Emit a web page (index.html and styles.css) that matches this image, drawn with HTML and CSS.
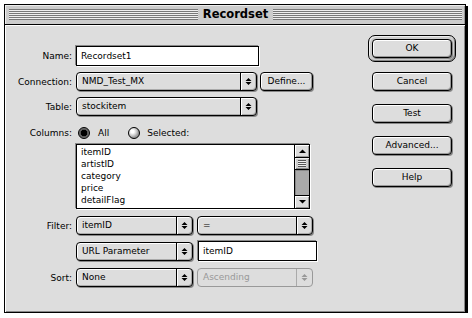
FILE: index.html
```html
<!DOCTYPE html>
<html>
<head>
<meta charset="UTF-8">
<title>Recordset</title>
<link rel="stylesheet" href="styles.css">
</head>
<body>
<div class="window">
    <div class="titlebar">
        <div class="stripes"></div>
        <span class="title">Recordset</span>
        <div class="stripes"></div>
    </div>
    <div class="content">
        <div class="form">
            <div class="row row-name">
                <span class="label">Name:</span>
                <div class="edit edit-name">Recordset1</div>
            </div>
            <div class="row row-gap6">
                <span class="label">Connection:</span>
                <div class="popup popup-wide">
                    <span class="popup-text">NMD_Test_MX</span>
                    <span class="popup-arrows"><svg width="7" height="9" viewBox="0 0 7 9"><path d="M0.5 4H6.5L3.5 1Z M0.5 5H6.5L3.5 8Z"/></svg></span>
                </div>
                <div class="button button-define">Define...</div>
            </div>
            <div class="row row-gap6">
                <span class="label">Table:</span>
                <div class="popup popup-wide">
                    <span class="popup-text">stockitem</span>
                    <span class="popup-arrows"><svg width="7" height="9" viewBox="0 0 7 9"><path d="M0.5 4H6.5L3.5 1Z M0.5 5H6.5L3.5 8Z"/></svg></span>
                </div>
            </div>
            <div class="row row-columns">
                <span class="label">Columns:</span>
                <span class="radio radio-on"></span>
                <span class="radio-label">All</span>
                <span class="radio radio-off"></span>
                <span class="radio-label">Selected:</span>
            </div>
            <div class="row row-list">
                <span class="label"></span>
                <div class="listbox">
                    <div class="list-items">
                        <div>itemID</div>
                        <div>artistID</div>
                        <div>category</div>
                        <div>price</div>
                        <div>detailFlag</div>
                        <div>title</div>
                    </div>
                    <div class="scrollbar">
                        <div class="scroll-arrow scroll-up"><svg width="7" height="4" viewBox="0 0 7 4"><path d="M0 4H7L3.5 0.5Z"/></svg></div>
                        <div class="scroll-thumb"><span class="grip"></span></div>
                        <div class="scroll-track"></div>
                        <div class="scroll-arrow scroll-down"><svg width="7" height="4" viewBox="0 0 7 4"><path d="M0 0H7L3.5 3.5Z"/></svg></div>
                    </div>
                </div>
            </div>
            <div class="row row-filter">
                <span class="label">Filter:</span>
                <div class="popup popup-half">
                    <span class="popup-text">itemID</span>
                    <span class="popup-arrows"><svg width="7" height="9" viewBox="0 0 7 9"><path d="M0.5 4H6.5L3.5 1Z M0.5 5H6.5L3.5 8Z"/></svg></span>
                </div>
                <div class="popup popup-op">
                    <span class="popup-text">=</span>
                    <span class="popup-arrows"><svg width="7" height="9" viewBox="0 0 7 9"><path d="M0.5 4H6.5L3.5 1Z M0.5 5H6.5L3.5 8Z"/></svg></span>
                </div>
            </div>
            <div class="row row-gap6">
                <span class="label"></span>
                <div class="popup popup-half">
                    <span class="popup-text">URL Parameter</span>
                    <span class="popup-arrows"><svg width="7" height="9" viewBox="0 0 7 9"><path d="M0.5 4H6.5L3.5 1Z M0.5 5H6.5L3.5 8Z"/></svg></span>
                </div>
                <div class="edit edit-param">itemID</div>
            </div>
            <div class="row row-gap7">
                <span class="label">Sort:</span>
                <div class="popup popup-half">
                    <span class="popup-text">None</span>
                    <span class="popup-arrows"><svg width="7" height="9" viewBox="0 0 7 9"><path d="M0.5 4H6.5L3.5 1Z M0.5 5H6.5L3.5 8Z"/></svg></span>
                </div>
                <div class="popup popup-op popup-disabled">
                    <span class="popup-text">Ascending</span>
                    <span class="popup-arrows"><svg width="7" height="9" viewBox="0 0 7 9"><path d="M0.5 4H6.5L3.5 1Z M0.5 5H6.5L3.5 8Z"/></svg></span>
                </div>
            </div>
        </div>
        <div class="buttons">
            <div class="default-ring">
                <div class="button button-side">OK</div>
            </div>
            <div class="button button-side button-stack">Cancel</div>
            <div class="button button-side button-stack">Test</div>
            <div class="button button-side button-stack">Advanced...</div>
            <div class="button button-side button-stack">Help</div>
        </div>
    </div>
</div>
</body>
</html>
```

FILE: styles.css
```css
body {
    margin: 0;
    background: #fff;
    font-family: "DejaVu Sans", sans-serif;
    font-size: 9px;
    color: #000;
}
.window {
    margin: 4px 0 0 4px;
    width: 462px;
    height: 309px;
    box-sizing: border-box;
    border: 1px solid #000;
    box-shadow: 2px 2px 0 #000;
    background: #ddd;
    display: flex;
    flex-direction: column;
}
.titlebar {
    height: 20px;
    box-sizing: border-box;
    border-bottom: 1px solid #000;
    background: #ccc;
    box-shadow: inset 1px 1px 0 #eee, inset -1px 0 0 #999;
    padding: 4px 3px 4px 4px;
    display: flex;
    align-items: flex-start;
}
.stripes {
    flex: 1;
    height: 11px;
    background: repeating-linear-gradient(to bottom, #777 0, #777 1px, #eee 1px, #eee 2px);
}
.title {
    font-family: "DejaVu Sans", sans-serif;
    font-weight: bold;
    font-size: 11.5px;
    line-height: 11px;
    padding: 0 5px;
}
.content {
    flex: 1;
    display: flex;
    box-shadow: inset 1px 1px 0 #fff, inset -1px -1px 0 #888;
}
.form {
    width: 363px;
    padding-top: 21px;
}
.row {
    display: flex;
    align-items: center;
}
.row-gap6 { margin-top: 6px; }
.row-gap7 { margin-top: 7px; }
.row-columns {
    margin-top: 10px;
    height: 13px;
}
.row-list { margin-top: 5px; align-items: flex-start; }
.row-filter { margin-top: 7px; }
.label {
    width: 67px;
    margin-right: 4px;
    text-align: right;
    flex-shrink: 0;
}
.edit {
    box-sizing: border-box;
    height: 20px;
    line-height: 18px;
    border: 1px solid #000;
    background: #fff;
    box-shadow: -1px -1px 0 #888, 1px 1px 0 #fff;
    padding-left: 4px;
}
.edit-name { width: 183px; }
.edit-param { width: 119px; margin-left: 5px; }
.popup {
    box-sizing: border-box;
    height: 19px;
    border: 1px solid #000;
    border-radius: 4px;
    background: #ddd;
    box-shadow: inset 1px 1px 0 #fff, inset -1px -1px 0 #aaa, 1px 1px 0 #888;
    display: flex;
    align-items: stretch;
}
.popup-wide { width: 181px; }
.popup-half { width: 117px; }
.popup-op { width: 116px; margin-left: 4px; }
.popup-text {
    flex: 1;
    padding-left: 5px;
    line-height: 17px;
    white-space: nowrap;
}
.popup-arrows {
    width: 15px;
    border-left: 1px solid #000;
    box-shadow: inset 1px 0 0 #fff;
    display: flex;
    align-items: center;
    justify-content: center;
}
.popup-disabled {
    border-color: #999;
    color: #999;
    box-shadow: none;
}
.popup-disabled .popup-arrows {
    border-left-color: #aaa;
    box-shadow: none;
}
.popup-disabled svg { fill: #999; }
.button {
    box-sizing: border-box;
    height: 19px;
    border: 1px solid #000;
    border-radius: 4px;
    background: #ddd;
    box-shadow: inset 1px 1px 0 #fff, inset -1px -1px 0 #999, 1px 1px 0 #888;
    text-align: center;
    line-height: 17px;
}
.button-define { width: 53px; margin-left: 3px; }
.buttons {
    padding-top: 10px;
}
.default-ring {
    width: 88px;
    box-sizing: border-box;
    border: 1px solid #000;
    border-radius: 7px;
    padding: 3px;
    background: #ccc;
    box-shadow: inset 1px 1px 0 #eee, inset -1px -1px 0 #888;
}
.button-side { width: 80px; }
.button-stack { margin-left: 4px; margin-top: 13px; }
.default-ring + .button-stack { margin-top: 10px; }
.radio {
    width: 12px;
    height: 12px;
    box-sizing: border-box;
    border: 1px solid #000;
    border-radius: 50%;
    flex-shrink: 0;
}
.radio-on {
    margin-left: 2px;
    background: radial-gradient(circle, #000 0, #000 3px, #555 3.5px, #777 5px);
}
.radio-off {
    margin-left: 19px;
    background: radial-gradient(circle at 35% 35%, #fff 0, #fff 1.5px, #ccc 4px, #999 6px);
}
.radio-label { margin-left: 8px; }
.radio-off + .radio-label { margin-left: 7px; }
.listbox {
    width: 234px;
    height: 65px;
    box-sizing: border-box;
    border: 1px solid #000;
    background: #fff;
    box-shadow: -1px -1px 0 #888, 1px 1px 0 #fff;
    display: flex;
    overflow: hidden;
}
.list-items {
    flex: 1;
    padding: 1px 0 0 4px;
    line-height: 12px;
}
.scrollbar {
    width: 14px;
    border-left: 1px solid #000;
    display: flex;
    flex-direction: column;
}
.scroll-arrow {
    height: 12px;
    background: #ddd;
    box-shadow: inset 1px 1px 0 #fff, inset -1px -1px 0 #999;
    display: flex;
    align-items: center;
    justify-content: center;
}
.scroll-up { border-bottom: 1px solid #000; }
.scroll-down { border-top: 1px solid #000; }
.scroll-thumb {
    height: 11px;
    border-bottom: 1px solid #000;
    background: #ccc;
    box-shadow: inset 1px 1px 0 #eee, inset -1px -1px 0 #888;
    display: flex;
    align-items: center;
    justify-content: center;
}
.grip {
    width: 8px;
    height: 7px;
    background: repeating-linear-gradient(to bottom, #555 0, #555 1px, #eee 1px, #eee 2px);
}
.scroll-track {
    flex: 1;
    background: #aaa;
    box-shadow: inset 1px 1px 0 #888;
}
```
